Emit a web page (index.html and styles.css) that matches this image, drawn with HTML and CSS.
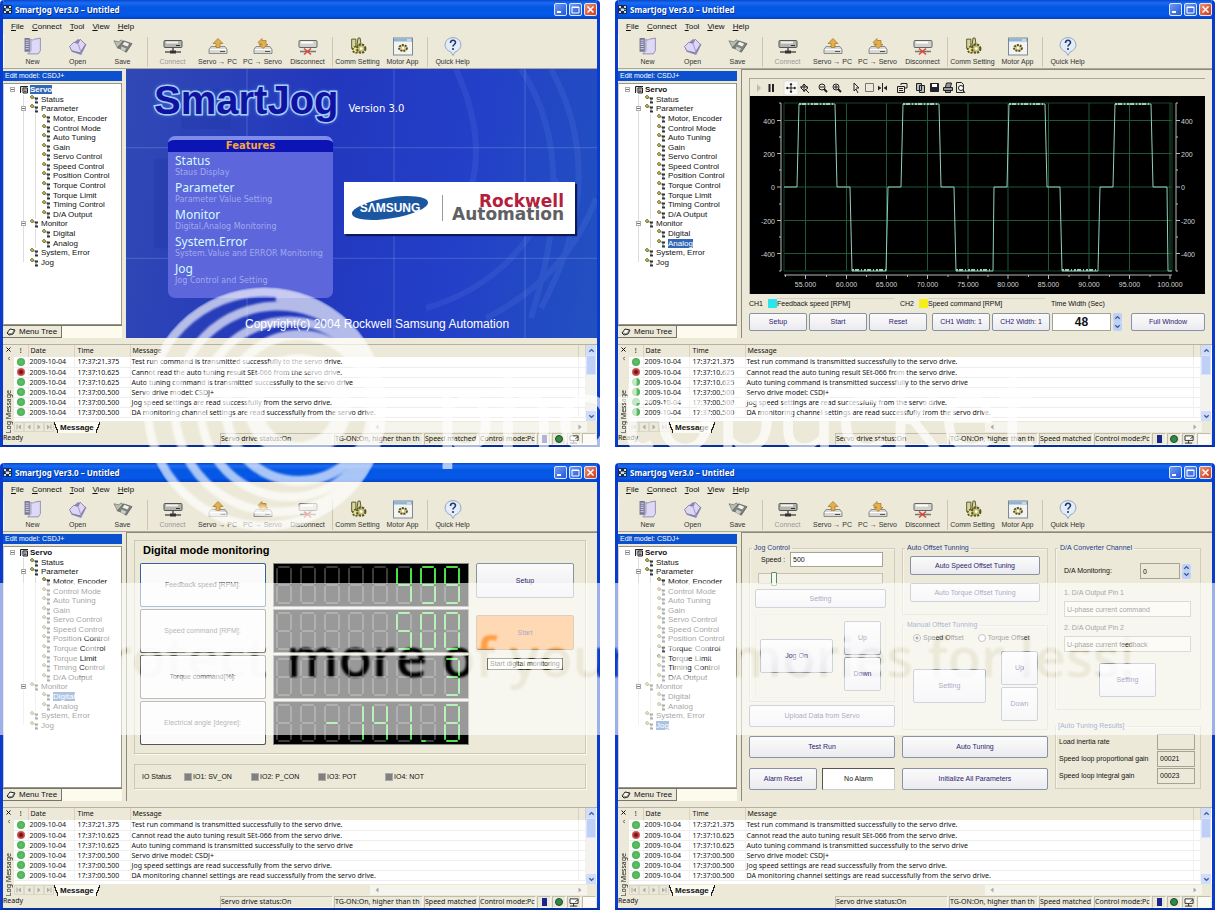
FILE: index.html
```html
<!DOCTYPE html>
<html lang="en">
<head>
<meta charset="utf-8">
<title>SmartJog Ver3.0</title>
<link rel="stylesheet" href="styles.css">
</head>
<body>
<svg class="sprite" aria-hidden="true">
  <symbol id="i-app" viewBox="0 0 9 9"><rect width="9" height="9" rx="1" fill="#1b2a52"/><path d="M1 1h2v2H1zM6 1h2v2H6zM3 3.500h3v2.500H3zM1 6h2v2H1zM6 6h2v2H6z" fill="#d5dce0"/><path d="M2 4h1M6 4.500h2" stroke="#48c46a"/></symbol>
  <symbol id="i-new" viewBox="0 0 18 18"><path d="M1 1h5v13H1z" fill="#77779a"/><path d="M2 3h3M2 5h3M2 7h3M2 9h3M2 11h3" stroke="#c9c9e2"/><path d="M7 2c1 2 3 0 4 0l5-1v12l-2 3H4l3-3z" fill="#ddd9f6" stroke="#8884a8" stroke-width=".8"/></symbol>
  <symbol id="i-open" viewBox="0 0 18 18"><path d="M1 9l8-7 8 5-5 10-9-3z" fill="#8f86b8"/><path d="M1 9l4-4 4 1 2-4 5 5-5 8-8-2z" fill="#ddd6f6" stroke="#766f98" stroke-width=".7"/><path d="M9 6l3 9" stroke="#a79dca"/></symbol>
  <symbol id="i-save" viewBox="0 0 21 18"><path d="M1 3l5 1 3-2 3 5-7 4z" fill="#b9bfae" stroke="#6b6f6a" stroke-width=".7"/><path d="M11 3l9 3-6 9-9-5z" fill="#7d827f" stroke="#444" stroke-width=".6"/><path d="M12 4l5 2-2 3-5-2z" fill="#f1f1ec"/><path d="M9 9l5 2-2 3-4-2z" fill="#c8cdc8"/></symbol>
  <symbol id="i-connect" viewBox="0 0 20 18"><rect x="1" y="3" width="18" height="7" rx="1" fill="#b5b5b0" stroke="#555"/><path d="M3 5h12" stroke="#f3f3ee" stroke-width="2"/><path d="M13 8h4" stroke="#333"/><path d="M10 10v4M2 14.500h16" stroke="#555" stroke-width="1.500"/><path d="M7 13h6v3H7z" fill="#333"/></symbol>
  <symbol id="i-up" viewBox="0 0 20 18"><path d="M3 9h14l2 3v4H1v-4z" fill="#d8d8d4" stroke="#777" stroke-width=".8"/><path d="M2 12h16" stroke="#fff"/><path d="M12 14h5" stroke="#555"/><path d="M10 1l5 5h-3v4H8V6H5z" fill="#e0b052" stroke="#a8711a" stroke-width=".7"/></symbol>
  <symbol id="i-down" viewBox="0 0 20 18"><path d="M3 9h14l2 3v4H1v-4z" fill="#d8d8d4" stroke="#777" stroke-width=".8"/><path d="M2 12h16" stroke="#fff"/><path d="M12 14h5" stroke="#555"/><path d="M5 5l4-4v2h4v4h2l-5 4-4-4h3V7z" fill="#e0b052" stroke="#a8711a" stroke-width=".7"/></symbol>
  <symbol id="i-disc" viewBox="0 0 20 18"><rect x="1" y="3" width="18" height="7" rx="1" fill="#d2d2cd" stroke="#666"/><path d="M3 5h12" stroke="#fff" stroke-width="2"/><path d="M2 14h16" stroke="#777" stroke-width="1.500"/><path d="M6 11l7 6M13 11l-7 6" stroke="#d8483c" stroke-width="1.600"/></symbol>
  <symbol id="i-comm" viewBox="0 0 18 18"><path d="M3 2h4v9H3zM9 1h2l1 7H8z" fill="#d7d79a" stroke="#56562c" stroke-width=".9"/><circle cx="7" cy="12" r="3" fill="#e6e08a" stroke="#55532e" stroke-width="1.500" stroke-dasharray="2 1"/><circle cx="12" cy="11" r="4" fill="#c8c069" stroke="#55532e" stroke-width="2" stroke-dasharray="2 1.200"/><circle cx="12" cy="11" r="1.300" fill="#fff"/></symbol>
  <symbol id="i-motor" viewBox="0 0 20 18"><rect x=".5" y=".5" width="19" height="17" fill="#f3f3f0" stroke="#7d8896"/><path d="M1 1h18v3H1z" fill="#8fb4d6"/><path d="M14 2.500h4" stroke="#fff"/><ellipse cx="10" cy="10.500" rx="4" ry="3" fill="#d3c782" stroke="#544d25" stroke-width="1.800" stroke-dasharray="2 1"/><circle cx="10" cy="10.500" r="1.200" fill="#fff"/></symbol>
  <symbol id="i-help" viewBox="0 0 20 18"><path d="M10 0a9 7.500 0 0 1 2 14.500L10 18l-2-3.500A9 7.500 0 0 1 10 0z" fill="#e3ecf7" stroke="#93a8c4"/><path d="M7.500 5.500c0-3.500 5-3.500 5-.5 0 2-2.500 2-2.500 4M10 10.500v2" fill="none" stroke="#203a72" stroke-width="1.600"/></symbol>
  <symbol id="i-node" viewBox="0 0 9 9"><path d="M2 3h4v4" fill="none" stroke="#777"/><path d="M2 0l2 2-2 2-2-2z" fill="#b8a83a" stroke="#4c4718" stroke-width=".5"/><path d="M5 2.500h3v2H5zM5 6.500h3v2H5z" fill="#2d3a38"/></symbol>
  <symbol id="i-servo" viewBox="0 0 9 9"><path d="M1.500 8V1.500H9M4 3h4.500v5H4z" fill="#cfd3d8" stroke="#222"/><path d="M5 5h2.500M5 6.500h2.500" stroke="#333" stroke-width=".8"/></symbol>
  <symbol id="i-tag" viewBox="0 0 10 8"><path d="M1 5l3-4 5 1-2 4-4 1z" fill="#f8f6e8" stroke="#222"/><path d="M2 5l4 1 2-4" fill="none" stroke="#555" stroke-width=".7"/></symbol>
  <symbol id="i-pc" viewBox="0 0 12 10"><path d="M1 1h9v5H1z" fill="#fff" stroke="#222"/><path d="M5 6v3M1 9h8M7 4l3-2" stroke="#222"/></symbol>
  <symbol id="i-uparrow" viewBox="0 0 8 8"><path d="M1.500 5.500L4 3l2.500 2.500" fill="none" stroke="#3f5a92" stroke-width="1.500"/></symbol>
  <symbol id="i-dnarrow" viewBox="0 0 8 8"><path d="M1.500 2.500L4 5l2.500-2.500" fill="none" stroke="#3f5a92" stroke-width="1.500"/></symbol>
  <symbol id="i-first" viewBox="0 0 8 8"><path d="M2 1.500v5" stroke="#aaa"/><path d="M6 1.500v5L3 4z" fill="#aaa"/></symbol>
  <symbol id="i-prev" viewBox="0 0 8 8"><path d="M5.500 1.500v5L2.500 4z" fill="#aaa"/></symbol>
  <symbol id="i-next" viewBox="0 0 8 8"><path d="M2.500 1.500v5L5.500 4z" fill="#aaa"/></symbol>
  <symbol id="i-end" viewBox="0 0 8 8"><path d="M6 1.500v5" stroke="#aaa"/><path d="M2 1.500v5L5 4z" fill="#aaa"/></symbol>
</svg>

<template id="tpl-top">
  <header class="titlebar">
    <svg class="app-icon"><use href="#i-app"/></svg><h1>SmartJog Ver3.0 – Untitled</h1>
    <button class="cap" aria-label="Minimize"><svg viewBox="0 0 11 11"><path d="M2 8h4" stroke="#fff" stroke-width="2"/></svg></button>
    <button class="cap" aria-label="Maximize"><svg viewBox="0 0 11 11"><path d="M2 3h7v6H2zM2 3.500h7" fill="none" stroke="#fff"/></svg></button>
    <button class="cap close" aria-label="Close"><svg viewBox="0 0 11 11"><path d="M2.500 2.500l6 6M8.500 2.500l-6 6" stroke="#fff" stroke-width="1.500"/></svg></button>
  </header>
  <nav class="menubar"><button><u>F</u>ile</button><button><u>C</u>onnect</button><button><u>T</u>ool</button><button><u>V</u>iew</button><button><u>H</u>elp</button></nav>
  <div class="toolbar">
    <button><svg><use href="#i-new"/></svg>New</button><button><svg><use href="#i-open"/></svg>Open</button><button><svg><use href="#i-save"/></svg>Save</button><span class="sep"></span>
    <button disabled><svg><use href="#i-connect"/></svg>Connect</button><button><svg><use href="#i-up"/></svg>Servo → PC</button><button><svg><use href="#i-down"/></svg>PC → Servo</button><button><svg><use href="#i-disc"/></svg>Disconnect</button><span class="sep"></span>
    <button><svg><use href="#i-comm"/></svg>Comm Setting</button><button><svg><use href="#i-motor"/></svg>Motor App</button><span class="sep"></span>
    <button><svg><use href="#i-help"/></svg>Quick Help</button>
  </div>
</template>

<template id="tpl-side">
  <aside class="side">
    <h2>Edit model: CSDJ+</h2>
    <div class="treebox"><ul class="tree"></ul></div>
    <div class="sidetabs"><button><svg><use href="#i-tag"/></svg>Menu Tree</button></div>
  </aside>
</template>

<template id="tpl-bottom">
  <section class="log">
    <div class="logside"><button aria-label="Close log"><svg viewBox="0 0 5 5"><path d="M.5.5l4 4M4.500.5l-4 4" stroke="#111"/></svg></button><svg class="pin" viewBox="0 0 5 5"><path d="M4 1L2 2.500 4 4" fill="none" stroke="#777"/></svg><span class="vert">Log Message</span></div>
    <div class="logmain">
      <div class="logview">
        <table>
          <colgroup><col class="c1"><col class="c2"><col class="c3"><col><col class="c5"></colgroup>
          <thead><tr><th>!</th><th>Date</th><th>Time</th><th>Message</th><th></th></tr></thead>
          <tbody></tbody>
        </table>
        <div class="vscroll"><button aria-label="Scroll up"><svg><use href="#i-uparrow"/></svg></button><span class="thumb"></span><button class="last" aria-label="Scroll down"><svg><use href="#i-dnarrow"/></svg></button></div>
      </div>
      <div class="sheets">
        <button disabled aria-label="First"><svg><use href="#i-first"/></svg></button><button disabled aria-label="Previous"><svg><use href="#i-prev"/></svg></button><button disabled aria-label="Next"><svg><use href="#i-next"/></svg></button><button disabled aria-label="Last"><svg><use href="#i-end"/></svg></button>
        <b>Message</b><span class="hscroll"><svg><use href="#i-prev"/></svg><svg><use href="#i-next"/></svg></span>
      </div>
    </div>
  </section>
  <footer class="status"><span class="grow">Ready</span><span class="cell s1">Servo drive status:On</span><span class="cell s2">TG-ON:On, higher than th</span><span class="cell s3">Speed matched</span><span class="cell s4">Control mode:Pc</span><span class="cell ic"><i class="batt"></i></span><span class="cell ic"><i class="led"></i></span><span class="cell ic"><svg><use href="#i-pc"/></svg></span><span class="cell ic blank"></span></footer>
</template>

<main class="page">
<article class="window" data-selected="Servo">
  <div class="view splash">
    <svg class="lines" viewBox="0 0 471 270" preserveAspectRatio="none" aria-hidden="true"><path d="M121 0V270M268 0V270M399 0V270M0 79H471M0 190H471" stroke="#a9bdf5" stroke-opacity=".28"/><path d="M330 0q40 90 0 150M395 0q60 90 10 250M425 0q60 110-10 240M300 240q100-30 130-130M360 250q80-40 110-120" fill="none" stroke="#8fb0ff" stroke-opacity=".1" stroke-width="6"/><path d="M28 90h30v90H28zM55 20h50v40H55z" fill="#1b2f96" fill-opacity=".2"/></svg>
    <div class="brand"><strong>SmartJog</strong><span>Version 3.0</span></div>
    <div class="intro">
      <section class="features"><h3>Features</h3>
        <dl><dt>Status</dt><dd>Staus Display</dd><dt>Parameter</dt><dd>Parameter Value Setting</dd><dt>Monitor</dt><dd>Digital,Analog Monitoring</dd><dt>System.Error</dt><dd>System.Value and ERROR Monitoring</dd><dt>Jog</dt><dd>Jog Control and Setting</dd></dl>
      </section>
      <div class="makers">
        <svg viewBox="0 0 78 28"><ellipse cx="39" cy="14" rx="38.500" ry="10.500" transform="rotate(-9 39 14)" fill="#1b56a0"/><text x="39" y="18" text-anchor="middle">SΛMSUNG</text></svg>
        <p><em>Rockwell</em>Automation</p>
      </div>
    </div>
    <p class="copy">Copyright(c) 2004 Rockwell Samsung Automation</p>
  </div>
</article>

<article class="window" data-selected="Analog">
  <div class="view analog">
    <div class="scope">
      <svg class="tools" viewBox="0 0 230 17" fill="none" stroke="#222">
        <path d="M7 5l4 4-4 4z" fill="#bbb" stroke="none"/><path d="M19.500 5v8M23 5v8" stroke-width="2"/>
        <path d="M34 2h14v14H34z" fill="#faf9f5" stroke="#ddd"/><path d="M36 9h10M41 4v10"/><path d="M36 9l2-1.500v3zM46 9l-2-1.500v3zM41 4l1.500 2h-3zM41 14l1.500-2h-3z" fill="#222" stroke="none"/><path d="M54 5v8M50 8h8M54 5l4 4-4 3-3-3zM55 10l4 4"/>
        <circle cx="72" cy="8" r="3"/><path d="M74 10l3 3" stroke-width="2"/><path d="M70 8h4"/><circle cx="86" cy="8" r="3"/><path d="M88 10l3 3" stroke-width="2"/><path d="M84 8h4M86 6v4"/>
        <path d="M104 4v8l2-2 2 4M104 4l5 5h-3" fill="#eee"/><path d="M115.500 4.500h8v8h-8z" stroke="#777"/><path d="M132.500 4v9M128 9h3M134 9h3"/><path d="M128 6.500l3 2.500-3 2.500zM137 6.500L134 9l3 2.500z" fill="#222" stroke="none"/>
        <path d="M147.500 7.500h7v6h-7zM151 6V4.500h6V9h-2"/><path d="M149 9.500h4M149 11.500h4"/>
        <path d="M166.500 4.500h5v7h-5zM169.500 6.500h5v7h-5z" fill="#bbb"/><path d="M180.500 4.500h8v8h-8z" fill="#223"/><path d="M182 5h5v3h-5z" fill="#fff" stroke="none"/><path d="M193.500 8.500h9v3h-9zM195.500 8l1-4h5l-1 4M195.500 12v1.500h5V12" fill="#999"/><path d="M206.500 3.500h5l2 2v8h-7z"/><circle cx="211" cy="9" r="2.500" fill="#fff"/><path d="M213 11l2 3"/>
      </svg>
      <svg class="chart" viewBox="0 0 455 198" role="img" aria-label="Feedback speed and speed command over time"></svg>
    </div>
    <div class="legend"><span>CH1</span><i class="cyan"></i><b>Feedback speed [RPM]</b><span>CH2</span><i class="yellow"></i><b>Speed command [RPM]</b><label for="tw">Time Width (Sec)</label></div>
    <div class="controls"><button>Setup</button><button>Start</button><button>Reset</button><button class="ml">CH1 Width: 1</button><button>CH2 Width: 1</button><input id="tw" value="48"><span class="spin"><button aria-label="Increase"><svg><use href="#i-uparrow"/></svg></button><button aria-label="Decrease"><svg><use href="#i-dnarrow"/></svg></button></span><button class="full">Full Window</button></div>
  </div>
</article>

<article class="window" data-selected="Digital">
  <div class="view digital">
    <section class="panel">
      <h3>Digital mode monitoring</h3>
      <div class="readouts">
        <div class="names"><button class="focus">Feedback speed [RPM]:</button><button>Speed command [RPM]:</button><button>Torque command[%]:</button><button>Electrical angle [degree]:</button></div>
        <div class="digits"><output data-value="     499"></output><output data-value="     500"></output><output data-value="       3"></output><output data-value="  -141.8"></output></div>
        <div class="acts"><button>Setup</button><button class="hot">Start</button><span class="tip">Start digital monitoring</span></div>
      </div>
    </section>
    <section class="io"><span>IO Status</span><span><i></i>IO1: SV_ON</span><span><i></i>IO2: P_CON</span><span><i></i>IO3: POT</span><span><i></i>IO4: NOT</span></section>
  </div>
</article>

<article class="window" data-selected="Jog">
  <div class="view jog">
    <div class="col">
      <fieldset class="jc"><legend>Jog Control</legend>
        <div class="speed"><label for="sp">Speed :</label><input id="sp" value="500"></div>
        <input class="range" type="range" min="0" max="100" value="10" aria-label="Speed">
        <button>Setting</button>
        <div class="pad"><button class="big">Jog On</button><div class="stack"><button>Up</button><button>Down</button></div></div>
      </fieldset>
      <button class="tall up">Upload Data from Servo</button>
      <button class="tall">Test Run</button>
      <div class="alarm"><button class="tall">Alarm Reset</button><output>No Alarm</output></div>
    </div>
    <div class="col">
      <fieldset class="auto"><legend>Auto Offset Tunning</legend><button>Auto Speed Offset Tuning</button><button>Auto Torque Offset Tuning</button></fieldset>
      <fieldset class="manual"><legend>Manual Offset Tunning</legend>
        <div class="radios"><label><input type="radio" name="off" checked>Speed Offset</label><label><input type="radio" name="off">Torque Offset</label></div>
        <div class="pad"><button class="big">Setting</button><div class="stack"><button>Up</button><button>Down</button></div></div>
      </fieldset>
      <button class="tall">Auto Tuning</button>
      <button class="tall init">Initialize All Parameters</button>
    </div>
    <div class="col">
      <fieldset class="da"><legend>D/A Converter Channel</legend>
        <div class="mon"><label for="dm">D/A Monitoring:</label><input id="dm" value="0"><span class="spin"><button aria-label="Increase"><svg><use href="#i-uparrow"/></svg></button><button aria-label="Decrease"><svg><use href="#i-dnarrow"/></svg></button></span></div>
        <label for="p1">1. D/A Output Pin 1</label><input id="p1" value="U-phase current command">
        <label for="p2">2. D/A Output Pin 2</label><input id="p2" value="U-phase current feedback">
        <button class="set">Setting</button>
      </fieldset>
      <fieldset class="res"><legend>[Auto Tuning Results]</legend>
        <div><label for="r1">Load inertia rate</label><input id="r1"></div>
        <div><label for="r2">Speed loop proportional gain</label><input id="r2" value="00021"></div>
        <div><label for="r3">Speed loop integral gain</label><input id="r3" value="00023"></div>
      </fieldset>
    </div>
  </div>
</article>

<svg class="watermark" viewBox="0 0 1215 911" preserveAspectRatio="xMinYMin meet">
  <defs>
    <filter id="soft"><feGaussianBlur stdDeviation="1"/></filter>
    <mask id="cut"><rect y="583" width="1215" height="152" fill="#fff"/><g class="promo" fill="#000" filter="url(#soft)"><text x="268" y="677" text-anchor="end">Protect</text><text x="286" y="677">more of your memories for less!</text></g></mask>
    <clipPath id="disc"><circle cx="265" cy="409" r="122"/></clipPath>
  </defs>
  <rect y="583" width="1215" height="152" fill="#fff" fill-opacity=".6" mask="url(#cut)"/>
  <g fill="none" stroke="#fff" opacity=".66" clip-path="url(#disc)" filter="url(#soft)">
    <circle cx="265" cy="409" r="117" stroke-width="9"/>
    <circle cx="278" cy="409" r="103" stroke-width="9"/>
    <circle cx="289" cy="409" r="88" stroke-width="9"/>
    <circle cx="299" cy="408" r="73" stroke-width="10"/>
    <path d="M276 297A112 112 0 0 1 355 478" stroke-width="9"/>
    <circle cx="298" cy="407" r="44" stroke-width="18"/>
  </g>
  <text class="mark" x="435" y="450" fill="#fff" fill-opacity=".66">photobucket</text>
</svg>
</main>
<script src="app.js"></script>
</body>
</html>
```

FILE: styles.css
```css
* { box-sizing: border-box; }
body { margin: 0; background: #fff; font: 7px/10px "Liberation Sans", Arial, sans-serif; color: #111; }
h1, h2, h3, p, ul, dl, dd, fieldset { margin: 0; padding: 0; }
button, input, output { font: inherit; color: inherit; }
button { padding: 0; margin: 0; background: none; border: 0; white-space: nowrap; }
i { font-style: normal; }
.sprite { position: absolute; width: 0; height: 0; }
.page { position: relative; display: grid; grid-template-columns: 1fr 1fr; grid-auto-rows: 1fr; gap: 16px 15px; min-height: 100vh; padding-bottom: 1px; }
.window { display: flex; flex-direction: column; min-width: 0; background: #ece9d8; border: 3px solid #0a3bcf; border-top: 0; border-bottom: 2px solid #062f9c; border-radius: 4px 4px 0 0; overflow: hidden; }

.titlebar { display: flex; align-items: center; gap: 2px; height: 19px; margin: 0 -3px; padding: 0 3px; background: linear-gradient(#0a48c8, #1a6cf6 3px, #0556e0 7px, #0558ea 15px, #0441c4); color: #fff; }
.app-icon { width: 9px; height: 9px; }
.titlebar h1 { flex: 1; font: bold 8px/12px "Noto Sans", sans-serif; padding-left: 1px; text-shadow: 1px 1px #0a2f8c; }
.cap { width: 13px; height: 13px; border: 1px solid #dbe6ff; border-radius: 2px; background: linear-gradient(135deg, #6f9cf5, #2257d6); }
.cap svg { display: block; width: 11px; height: 11px; }
.cap.close { background: linear-gradient(135deg, #ec9070, #cf3a14); }

.menubar { display: flex; gap: 8px; height: 15px; padding: 0 8px; font-size: 8px; }
.toolbar { display: flex; height: 35px; padding: 3px 0 0 7px; border-bottom: 1px solid #aca899; box-shadow: inset 1px 0 #f8f7f0; }
.toolbar button { width: 45px; display: flex; flex-direction: column; align-items: center; gap: 1px; color: #333; }
.toolbar button:disabled { color: #999; }
.toolbar svg { width: 20px; height: 19px; }
.sep { width: 1px; margin: 0 2px; height: 30px; background: #c9c6b6; }

.body { flex: 1; display: grid; grid-template-columns: 119px minmax(0, 1fr); gap: 4px; min-height: 0; }
.side { display: flex; flex-direction: column; padding-top: 2px; }
.side h2 { background: #0b50cc; color: #fff; font: 7px/10px "Liberation Sans", sans-serif; padding-left: 2px; }
.treebox { flex: 1; margin-top: 2px; background: #fff; border: 1px solid #999683; border-left-color: #cfccbc; padding: 1px 0; }
.tree { list-style: none; height: 182px; display: grid; grid-template-rows: repeat(19, 1fr); font-size: 8px; color: #111; }
.tree li { position: relative; display: flex; align-items: center; gap: 2px; min-height: 0; line-height: 9px; }
.tree svg { width: 9px; height: 9px; flex: none; }
.tree .l0 { padding-left: 15px; font-weight: bold; }
.tree .l1 { padding-left: 26px; }
.tree .l2 { padding-left: 38px; }
.tree li::before { content: ""; position: absolute; left: 19px; top: 0; bottom: 0; border-left: 1px solid #ddd; }
.tree .l0::before { display: none; }
.tree .l2::after { content: ""; position: absolute; left: 31px; width: 5px; top: 0; height: 100%; border-left: 1px solid #ddd; }
.tree .end::before { bottom: 50%; }
.tree .box { position: absolute; z-index: 1; left: 17px; width: 5px; height: 5px; border: 1px solid #aaa; background: linear-gradient(#fff 1px, #777 1px, #777 2px, #fff 2px); }
.tree .l0 .box { left: 6px; }
.tree .sel { background: #3167b5; color: #fff; }
.sidetabs { height: 13px; background: #fdfbee; border-top: 1px solid #77746a; }
.sidetabs button { display: flex; align-items: center; gap: 3px; height: 12px; padding: 0 4px 0 3px; background: #ece9d8; border: 1px solid #77746a; border-width: 0 1px 1px 0; font-size: 8px; }
.sidetabs svg { width: 10px; height: 8px; }
.view { border-top: 1px solid #8d8a7c; border-left: 1px solid #8d8a7c; min-width: 0; }

.splash { position: relative; display: flex; flex-direction: column; padding: 7px 0 0 28px; border: 0; background: linear-gradient(100deg, #3149b4, #2237bd 40%, #2340c8 70%, #2251c0); color: #fff; }
.lines { position: absolute; inset: 0; width: 100%; height: 100%; }
.brand, .intro, .copy { position: relative; }
.brand { display: flex; align-items: center; gap: 10px; height: 60px; }
.brand strong { font: bold 40px/46px "Liberation Sans", sans-serif; color: #1212a0; -webkit-text-stroke: 3px #a9d4f8; paint-order: stroke fill; text-shadow: 0 0 4px #8fc0ff; padding-bottom: 12px; }
.brand span { font: 10px/12px "DejaVu Sans", sans-serif; padding-top: 6px; }
.intro { display: flex; gap: 11px; padding-left: 14px; }
.features { width: 165px; height: 162px; background: #5d66da; border-radius: 7px; border-top: 4px solid #7f8ce8; overflow: hidden; }
.features h3 { background: #0c14b4; color: #f7a63c; font: bold 10px/12px "DejaVu Sans", sans-serif; text-align: center; }
.features dl { padding: 1px 0 0 7px; white-space: nowrap; }
.features dt { font: 12px/16px "Noto Sans", sans-serif; color: #d3fbff; }
.features dd { font: 8px/8px "DejaVu Sans", sans-serif; margin-bottom: 3px; color: #a0aaee; }
.makers { display: flex; align-items: center; justify-content: space-between; width: 231px; height: 52px; margin-top: 46px; padding: 0 11px 0 7px; background: #fff; box-shadow: 2px 2px 1px #0d1a58; }
.makers svg { width: 78px; height: 28px; }
.makers text { font: bold 12px "Liberation Sans", sans-serif; fill: #fff; }
.makers p { border-left: 1px solid #999; padding-left: 9px; text-align: right; font: bold 17px/13px "DejaVu Sans", sans-serif; color: #5f6063; }
.makers em { display: block; font-style: normal; color: #b3203c; }
.copy { padding: 19px 0 0 91px; font-size: 12px; line-height: 14px; }

.analog { padding: 8px 7px 0; }
.scope { border-top: 1px solid #aca899; border-left: 1px solid #aca899; }
.tools { display: block; width: 230px; height: 17px; }
.chart { display: block; width: 100%; background: #000; }
.chart text { font: 7px "Liberation Sans", sans-serif; fill: #d4d4d4; }
.legend { display: flex; align-items: center; height: 19px; }
.legend span { width: 19px; }
.legend i { width: 9px; height: 9px; }
.legend .cyan { background: #28e5ee; }
.legend .yellow { background: #f6ee18; }
.legend b { font-weight: normal; width: 117px; margin-right: 6px; border-top: 1px solid #d5d2c2; }
.controls { display: flex; gap: 2px; height: 18px; }
.view button { background: linear-gradient(#fcfbfa, #ebeaf0); border: 1px solid #8792a3; border-radius: 2px; color: #2b1c6e; }
.controls > button { width: 58px; }
.controls .ml { margin-left: 3px; }
.view input, .view output { border: 1px solid #a5a394; background: #fff; padding: 0 2px; min-width: 0; }
.view .controls input { width: 59px; text-align: center; font-weight: bold; font-size: 12px; }
.spin { display: flex; flex-direction: column; width: 9px; }
.view .spin button, .vscroll button { flex: 1; border: 0; background: #bdd0f7; line-height: 0; }
.spin svg, .vscroll svg { width: 7px; height: 7px; }
.controls .full { width: 74px; margin-left: auto; }

.digital { padding: 7px 11px 0 7px; }
.panel, .io { border: 1px solid #cbc8b8; box-shadow: 1px 1px #faf9f2; }
.panel { height: 214px; padding: 3px 8px 0 5px; }
.panel h3 { font: bold 11px/13px "Liberation Sans", sans-serif; padding-left: 3px; color: #000; }
.readouts { display: flex; gap: 7px; padding-top: 6px; }
.names, .digits { display: grid; grid-template-rows: repeat(4, 44px); gap: 2px; }
.names { width: 126px; }
.names button { background: #fafafa; border: 1px solid #555; outline: 1px solid #fff; outline-offset: -2px; border-width: 1px 2px 2px 1px; color: #444; }
.names .focus { border-color: #35609f; }
.digits { width: 196px; }
.digits output { padding: 0; background: #000; border: 1px solid #888; }
.digits svg { display: block; width: 194px; height: 42px; }
.acts { display: flex; flex-direction: column; align-items: flex-start; width: 98px; }
.acts button { width: 98px; height: 35px; }
.acts .hot { margin-top: 17px; background: #ff9f45; border-color: #a78862; }
.tip { margin: 8px 0 0 11px; padding: 0 2px; background: #fffff0; border: 1px solid #333; white-space: nowrap; }
.io { display: flex; align-items: center; height: 25px; margin-top: 10px; padding-left: 7px; }
.io span { width: 67px; display: flex; align-items: center; gap: 1px; }
.io span:first-child { width: 42px; }
.io i { width: 8px; height: 8px; background: #808080; border: 1px solid #aaa; }

.jog { display: flex; justify-content: space-between; padding: 11px 11px 0 7px; }
.col { width: 146px; display: flex; flex-direction: column; }
.col fieldset { border: 1px solid #d0cdbd; box-shadow: inset 1px 1px #f6f4ea; min-width: 0; display: flex; flex-direction: column; }
.col legend { color: #1e3c86; padding: 0 2px; line-height: 8px; }
.jc { height: 158px; padding: 0 8px 0 5px; }
.col .jc legend { margin-left: -3px; }
.jc > * { flex: none; }
.speed { display: flex; align-items: center; padding: 0 3px 0 6px; }
.speed label { width: 29px; }
.speed input { flex: 1; height: 15px; }
.view .range { appearance: none; height: 11px; margin: 6px 3px 0; border: 1px solid #c4c1b2; background: #f3f1e6; padding: 0; }
.range::-webkit-slider-thumb { appearance: none; width: 6px; height: 14px; background: #f6f6f2; border: 1px solid #5a8a6c; border-radius: 1px; }
.jc > button { height: 19px; margin-top: 5px; }
.pad { display: flex; justify-content: space-between; align-items: center; border: 1px solid #e0ddcf; }
.jc .pad { height: 84px; margin-top: 6px; padding: 0 4px; }
.big { width: 73px; height: 34px; }
.stack { display: flex; flex-direction: column; gap: 2px; }
.stack button { width: 37px; height: 34px; }
.tall { height: 22px; flex: none; }
.up { margin: 3px 0 9px; }
.alarm { display: flex; gap: 5px; margin-top: 10px; }
.alarm button { width: 68px; }
.alarm output { flex: 1; text-align: center; line-height: 20px; border-color: #555 #ccc #ccc #555; }
.auto { height: 71px; padding: 4px 7px 0; gap: 8px; }
.auto button { height: 19px; }
.auto legend { margin-left: -5px; }
.manual legend { margin-left: -8px; }
.manual { height: 109px; margin: 6px 0; padding: 4px 9px 0 10px; }
.radios { display: flex; gap: 14px; }
.radios label { display: flex; align-items: center; gap: 2px; white-space: nowrap; }
.view .radios input { appearance: none; width: 8px; height: 8px; margin: 0; padding: 0; border: 1px solid #667; border-radius: 50%; }
.view .radios input:checked { background: radial-gradient(#333 1px, #fff 2px); }
.manual .pad { border: 0; margin-top: 8px; }
.init { margin-top: 10px; }
.da { height: 166px; padding: 11px 9px 0 8px; }
.da legend { margin-left: -6px; }
.da > input { height: 16px; margin: 3px 0 6px; }
.view .da > input { background: #f7f5e9; }
.mon { display: flex; align-items: center; gap: 2px; margin-bottom: 9px; }
.mon label { flex: 1; }
.view .mon input { width: 40px; height: 16px; background: #ece9d8; }
.mon .spin { height: 15px; }
.set { width: 57px; height: 34px; align-self: center; margin-top: 5px; }
.res { height: 67px; margin-top: 12px; padding: 3px 5px 0 3px; }
.res legend { margin-left: -3px; }
.res div { display: flex; align-items: center; justify-content: space-between; height: 17px; white-space: nowrap; }
.view .res input { width: 38px; height: 16px; background: #ece9d8; }

.log { display: flex; height: 89px; margin-top: 6px; border-top: 1px solid #b5b2a2; }
.logside { display: flex; flex-direction: column; align-items: center; width: 11px; padding-top: 2px; }
.logside button, .pin { width: 5px; height: 5px; line-height: 0; }
.logside button svg { width: 5px; height: 5px; }
.pin { margin-top: 4px; }
.vert { writing-mode: vertical-rl; transform: rotate(180deg); margin-top: auto; white-space: nowrap; line-height: 9px; font-family: "Noto Sans", sans-serif; }
.logmain { flex: 1; min-width: 0; display: flex; flex-direction: column; }
.logview { display: flex; flex: 1; background: #fff; min-height: 0; }
.logview table { flex: 1; width: 100%; table-layout: fixed; border-collapse: collapse; font-family: "Noto Sans", sans-serif; align-self: flex-start; }
.c1 { width: 14px; }
.c2 { width: 46px; }
.c3 { width: 56px; }
.c5 { width: 7px; }
.log th { height: 12px; padding: 0 2px; line-height: 10px; text-align: left; font-weight: normal; background: #ece9d8; border-right: 1px solid #d5d2c3; }
.log td { height: 10px; padding: 0 1px; line-height: 9px; border-bottom: 1px solid #eee; border-right: 1px solid #f2f2f2; white-space: nowrap; }
.log th:first-child { text-align: center; }
.log td:nth-child(3), .log th:nth-child(3) { padding-left: 3px; }
.dot { display: block; width: 8px; height: 8px; margin: 0 auto; border-radius: 50%; background: radial-gradient(#63c463, #3fa650); }
.dot.bad { background: radial-gradient(#7a1010 20%, #d35a5a 60%); }
.vscroll { display: flex; flex-direction: column; width: 10px; margin-right: 1px; background: #f3f2ee; }
.vscroll button { flex: none; height: 10px; background: #cfdcfa; }
.vscroll .last { margin-top: auto; }
.thumb { height: 20px; background: #bfd0f8; border: 1px solid #d9e3fb; border-radius: 1px; }
.sheets { display: flex; height: 12px; align-items: center; }
.sheets button { width: 10px; height: 10px; border: 1px solid #dad7c8; line-height: 0; }
.sheets svg { width: 8px; height: 8px; }
.sheets b { position: relative; font-size: 8px; line-height: 11px; padding: 0 2px; margin: 0 4px; background: #fbfaf3; }
.sheets b::before, .sheets b::after { content: ""; position: absolute; top: 0; bottom: 0; width: 4px; background: linear-gradient(68deg, #ece9d8 46%, #222 46%, #222 62%, #fbfaf3 62%); left: -4px; }
.sheets b::before { background: linear-gradient(68deg, #ece9d8 42%, #222 42%, #222 60%, #fbfaf3 60%); }
.sheets b::after { left: auto; right: -4px; background: linear-gradient(-68deg, #ece9d8 42%, #222 42%, #222 60%, #fbfaf3 60%); }
.hscroll { display: flex; align-items: center; justify-content: space-between; flex: 1; margin: 0 10px 0 270px; padding: 0 3px; height: 10px; background: #f5f4ed; }
.status { display: flex; gap: 1px; height: 12px; white-space: nowrap; padding-right: 1px; font-family: "Noto Sans", sans-serif; }
.grow { flex: 1; }
.cell { border: 1px solid #c6c3b4; border-color: #c0bdae #f8f7f0 #f8f7f0 #c0bdae; overflow: hidden; line-height: 9px; }
.s1 { width: 113px; }
.s2 { width: 89px; }
.s3 { width: 54px; }
.s4 { width: 57px; }
.ic { width: 14px; display: grid; place-items: center; }
.ic svg { width: 11px; height: 9px; }
.batt { width: 5px; height: 8px; background: #1a2590; }
.led { width: 8px; height: 8px; border-radius: 50%; background: #2f8a45; border: 1px solid #1f4a2a; }
.blank { background: #fbfaf5; }

.watermark { position: absolute; inset: 0; width: 100%; height: auto; pointer-events: none; }
.promo { font: 600 55px "Open Sans", sans-serif; }
.mark { font: 108px Lato, sans-serif; }
```

FILE: app.js
```js
const TREE = [
  ['Servo', 0], ['Status', 1], ['Parameter', 1], ['Motor, Encoder', 2], ['Control Mode', 2],
  ['Auto Tuning', 2], ['Gain', 2], ['Servo Control', 2], ['Speed Control', 2],
  ['Position Control', 2], ['Torque Control', 2], ['Torque Limit', 2], ['Timing Control', 2],
  ['D/A Output', 2], ['Monitor', 1], ['Digital', 2], ['Analog', 2], ['System, Error', 1], ['Jog', 1]
];
const PARENTS = ['Servo', 'Parameter', 'Monitor'];
const LOG = [
  ['17:37:21.375', 'Test run command is transmitted successfully to the servo drive.'],
  ['17:37:10.625', 'Cannot read the auto tuning result SEt-066 from the servo drive.', 'bad'],
  ['17:37:10.625', 'Auto tuning command is transmitted successfully to the servo drive'],
  ['17:37:00.500', 'Servo drive model: CSDJ+'],
  ['17:37:00.500', 'Jog speed settings are read successfully from the servo drive.'],
  ['17:37:00.500', 'DA monitoring channel settings are read successfully from the servo drive.']
];
const stamp = id => document.getElementById(id).content.cloneNode(true);

document.querySelectorAll('.window').forEach(win => {
  const view = win.querySelector('.view');
  const body = document.createElement('div');
  body.className = 'body';
  body.append(stamp('tpl-side'), view);
  win.append(stamp('tpl-top'), body, stamp('tpl-bottom'));
  win.querySelector('.tree').innerHTML = TREE.map(([name, level]) =>
    `<li class="l${level}${name === 'Jog' ? ' end' : ''}">${PARENTS.includes(name) ? '<span class="box"></span>' : ''}` +
    `<svg><use href="#i-${level ? 'node' : 'servo'}"/></svg>` +
    `<span class="${name === win.dataset.selected ? 'sel' : ''}">${name}</span></li>`).join('');
  win.querySelector('tbody').innerHTML = LOG.map(([time, text, kind = '']) =>
    `<tr><td><span class="dot ${kind}"></span></td><td>2009-10-04</td><td>${time}</td><td>${text}</td><td></td></tr>`).join('');
});

/* Seven-segment readouts: segments a-g plus the decimal point */
const SEG = {
  a: 'M4 2h10', b: 'M16 4v14', c: 'M16 22v14', d: 'M4 38h10', e: 'M2 22v14', f: 'M2 4v14', g: 'M4 20h10'
};
const ON = { 0: 'abcdef', 1: 'bc', 3: 'abcdg', 4: 'bcfg', 5: 'acdfg', 8: 'abcdefg', 9: 'abcdfg', '-': 'g' };
document.querySelectorAll('.digits output').forEach(out => {
  const value = out.dataset.value;
  out.setAttribute('aria-label', value.trim());
  out.innerHTML = `<svg viewBox="0 0 194 42">${[...value].map((ch, i) =>
    `<g transform="translate(${i * 24 + 1} 1)" stroke-width="2" stroke-linecap="round">` +
    Object.entries(SEG).map(([k, d]) =>
      `<path d="${d}" stroke="${(ON[ch] || '').includes(k) ? '#4ce04c' : '#3c3c3c'}"/>`).join('') +
    (ch === '.' ? '<path d="M3 38h3" stroke="#4ce04c"/>' : '') + '</g>').join('')}</svg>`;
});

/* Oscilloscope chart */
const xs = [55.5, 96.5, 136.5, 177.5, 218, 258, 298.5, 339, 379.5, 420];
const ys = [24.5, 57.5, 91, 124.5, 157.5];
const line = (d, c) => `<path d="${d}" fill="none" stroke="${c}"/>`;
document.querySelector('.chart').innerHTML =
  line(xs.map(x => `M${x} 7V175`).join(''), '#1d5936') +
  line(ys.map(y => `M34 ${y}H422`).join(''), '#1d5936') +
  line('M34 7H422V175H34z', '#174628') +
  line('M31 7V175M426 7V175M34 179H422' + ys.map(y => `M27 ${y}h4M426 ${y}h4`).join('') + xs.map(x => `M${x} 179v4`).join('') +
    [7, 41, 74, 108, 141, 175].map(y => `M29 ${y}h2M426 ${y}h2`).join('') + xs.map(x => `M${x - 20} 179v2`).join(''), '#b9b9b9') +
  line('M34 91H47L49 8H85L87 91H100L102 175H136L138 91H151L153 8H189L191 91H204L206 175H243L244 91H257L259 8H295L297 91H310L312 175H348L350 91H363L365 8H401L403 91H417L418 175H422', '#8fd0bb') +
  [[49, 8], [153, 8], [259, 8], [365, 8], [102, 174], [206, 174], [312, 174]].map(([x, y]) =>
    `<path d="M${x} ${y}h35" stroke="#9fcdb6" stroke-dasharray="2 1 4 2 1 2" stroke-width="2"/>`).join('') +
  ys.map((y, i) => `<text x="25" y="${y + 3}" text-anchor="end">${400 - i * 200}</text><text x="431" y="${y + 3}">${400 - i * 200}</text>`).join('') +
  xs.map((x, i) => `<text x="${x}" y="191" text-anchor="middle">${55 + i * 5}.000</text>`).join('');
```
